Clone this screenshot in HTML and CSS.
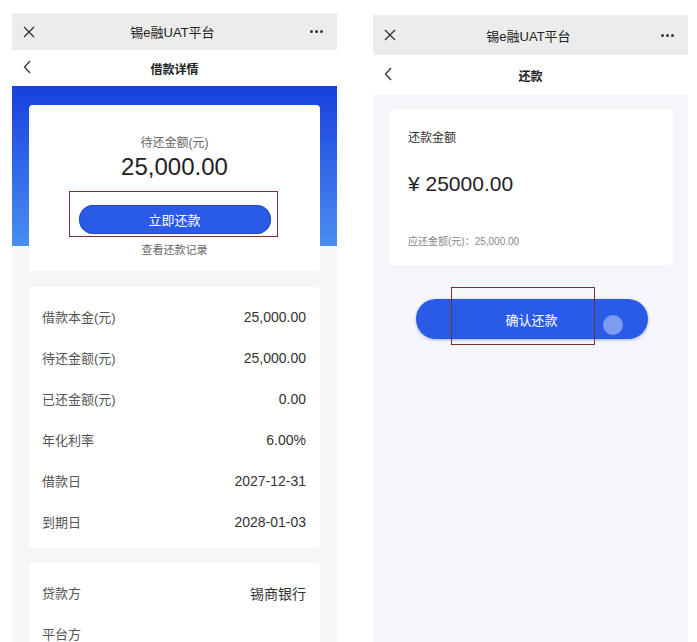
FILE: index.html
```html
<!doctype html>
<html lang="zh-CN">

<head>
    <meta charset="utf-8" />
    <meta name="viewport" content="width=device-width, initial-scale=1.0" />
    <title>借款详情 / 还款</title>
    <link rel="stylesheet" href="styles.css">
</head>

<body>
    <div class="screens">
        <!-- Left: loan details -->
        <div class="phone phone-left">
            <div class="top-bar">
                <svg class="icon-close" viewBox="0 0 12 12" width="12" height="12">
                    <path d="M1 1 L11 11 M11 1 L1 11" stroke="#333" stroke-width="1.4" fill="none" />
                </svg>
                <div class="top-title">锡e融UAT平台</div>
                <div class="icon-more"><span></span><span></span><span></span></div>
            </div>
            <div class="nav-bar">
                <svg class="icon-back" viewBox="0 0 8 14" width="8" height="14">
                    <path d="M7 1 L1.5 7 L7 13" stroke="#333" stroke-width="1.3" fill="none" />
                </svg>
                <div class="nav-title">借款详情</div>
            </div>
            <div class="detail-body">
                <div class="card summary-card">
                    <div class="summary-label">待还金额(元)</div>
                    <div class="summary-amount">25,000.00</div>
                    <div class="btn-wrap">
                        <div class="btn btn-small">立即还款</div>
                        <div class="mark mark-left"></div>
                    </div>
                    <div class="summary-link">查看还款记录</div>
                </div>

                <div class="card info-card">
                    <div class="info-row"><span>借款本金(元)</span><span class="val">25,000.00</span></div>
                    <div class="info-row"><span>待还金额(元)</span><span class="val">25,000.00</span></div>
                    <div class="info-row"><span>已还金额(元)</span><span class="val">0.00</span></div>
                    <div class="info-row"><span>年化利率</span><span class="val">6.00%</span></div>
                    <div class="info-row"><span>借款日</span><span class="val">2027-12-31</span></div>
                    <div class="info-row"><span>到期日</span><span class="val">2028-01-03</span></div>
                </div>

                <div class="card info-card">
                    <div class="info-row"><span>贷款方</span><span class="val">锡商银行</span></div>
                    <div class="info-row"><span>平台方</span><span class="val"></span></div>
                </div>
            </div>
        </div>

        <!-- Right: repayment -->
        <div class="phone phone-right">
            <div class="top-bar">
                <svg class="icon-close" viewBox="0 0 12 12" width="12" height="12">
                    <path d="M1 1 L11 11 M11 1 L1 11" stroke="#333" stroke-width="1.4" fill="none" />
                </svg>
                <div class="top-title">锡e融UAT平台</div>
                <div class="icon-more"><span></span><span></span><span></span></div>
            </div>
            <div class="nav-bar">
                <svg class="icon-back" viewBox="0 0 8 14" width="8" height="14">
                    <path d="M7 1 L1.5 7 L7 13" stroke="#333" stroke-width="1.3" fill="none" />
                </svg>
                <div class="nav-title">还款</div>
            </div>
            <div class="repay-body">
                <div class="card repay-card">
                    <div class="repay-label">还款金额</div>
                    <div class="repay-amount">¥ 25000.00</div>
                    <div class="repay-due">应还金额(元)：25,000.00</div>
                </div>
                <div class="btn-wrap btn-wrap-big">
                    <div class="btn btn-big">确认还款<span class="touch-dot"></span></div>
                    <div class="mark mark-right"></div>
                </div>
            </div>
        </div>
    </div>
</body>

</html>
```

FILE: styles.css
```css
* {
    box-sizing: border-box;
}

body {
    margin: 0;
    background: #fff;
    font-family: "Liberation Sans", "Noto Sans CJK SC", sans-serif;
    color: #222;
}

.screens {
    display: flex;
    align-items: flex-start;
    gap: 36px;
    padding-left: 12px;
    height: 642px;
    overflow: hidden;
}

.phone {
    display: flex;
    flex-direction: column;
    overflow: hidden;
}

.phone > * {
    flex-shrink: 0;
}

.phone-left {
    width: 325px;
    height: 629px;
    margin-top: 13px;
    background: #f5f6f8;
}

.phone-right {
    width: 315px;
    height: 627px;
    margin-top: 15px;
    background: #f4f6f9;
}

/* Top bar */
.top-bar {
    display: flex;
    align-items: center;
    justify-content: space-between;
    height: 37px;
    padding: 0 14px 0 11px;
    background: #ececec;
}

.phone-right .top-bar {
    height: 40px;
}

.top-title {
    font-size: 13px;
    color: #222;
}

.icon-more {
    display: flex;
    gap: 2px;
}

.icon-more span {
    width: 3px;
    height: 3px;
    border-radius: 50%;
    background: #333;
}

/* Nav bar */
.nav-bar {
    position: relative;
    display: flex;
    align-items: center;
    justify-content: center;
    height: 36px;
    background: #fff;
}

.phone-right .nav-bar {
    height: 40px;
}

.icon-back {
    position: absolute;
    left: 11px;
    top: 50%;
    margin-top: -8px;
}

.nav-title {
    font-size: 12px;
    font-weight: 700;
    color: #222;
}

/* Left content */
.detail-body {
    flex-grow: 1;
    padding: 19px 17px 0;
    background: linear-gradient(to bottom, #1840dd, #4a8ef2) top / 100% 160px no-repeat;
}

.card {
    background: #fff;
    border-radius: 4px;
}

.summary-card {
    display: flex;
    flex-direction: column;
    align-items: center;
    padding: 30px 0 14px;
}

.summary-label {
    font-size: 12px;
    line-height: 16px;
    color: #666;
}

.summary-amount {
    margin-top: 2px;
    font-size: 24px;
    line-height: 28px;
    color: #222;
}

.btn-wrap {
    position: relative;
    margin-top: 24px;
}

.btn {
    display: flex;
    align-items: center;
    justify-content: center;
    color: #fff;
    background: #2a5be6;
    border-radius: 999px;
}

.btn-small {
    width: 192px;
    height: 29px;
    font-size: 13px;
    box-shadow: inset 0 0 0 1px #1f47c9;
}

.mark {
    position: absolute;
    border: 1.5px solid #7b2e2e;
}

.mark-left {
    left: -10px;
    top: -14px;
    width: 209px;
    height: 46px;
}

.summary-link {
    margin-top: 9px;
    font-size: 11px;
    line-height: 14px;
    color: #666;
}

.info-card {
    margin-top: 16px;
    padding: 9px 14px 6px 13px;
}

.info-card + .info-card {
    margin-top: 15px;
}

.info-row {
    display: flex;
    align-items: center;
    justify-content: space-between;
    height: 41px;
    font-size: 13px;
    color: #555;
}

.info-row .val {
    font-size: 14px;
    color: #333;
}

/* Right content */
.repay-body {
    flex-grow: 1;
    display: flex;
    flex-direction: column;
    align-items: center;
    padding: 15px 15px 0 17px;
}

.repay-card {
    align-self: stretch;
    padding: 20px 18px 16px;
}

.repay-label {
    font-size: 12px;
    line-height: 16px;
    color: #333;
}

.repay-amount {
    margin-top: 25px;
    font-size: 21px;
    line-height: 26px;
    color: #222;
}

.repay-due {
    margin-top: 38px;
    font-size: 10px;
    line-height: 14px;
    color: #888;
}

.btn-wrap-big {
    margin-top: 34px;
}

.btn-big {
    position: relative;
    width: 232px;
    height: 40px;
    font-size: 13px;
    box-shadow: 0 1px 3px rgba(30, 70, 200, 0.4);
}

.touch-dot {
    position: absolute;
    right: 25px;
    top: 16px;
    width: 20px;
    height: 20px;
    border-radius: 50%;
    background: #7d9cf0;
}

.mark-right {
    left: 35px;
    top: -12px;
    width: 144px;
    height: 58px;
}
```
